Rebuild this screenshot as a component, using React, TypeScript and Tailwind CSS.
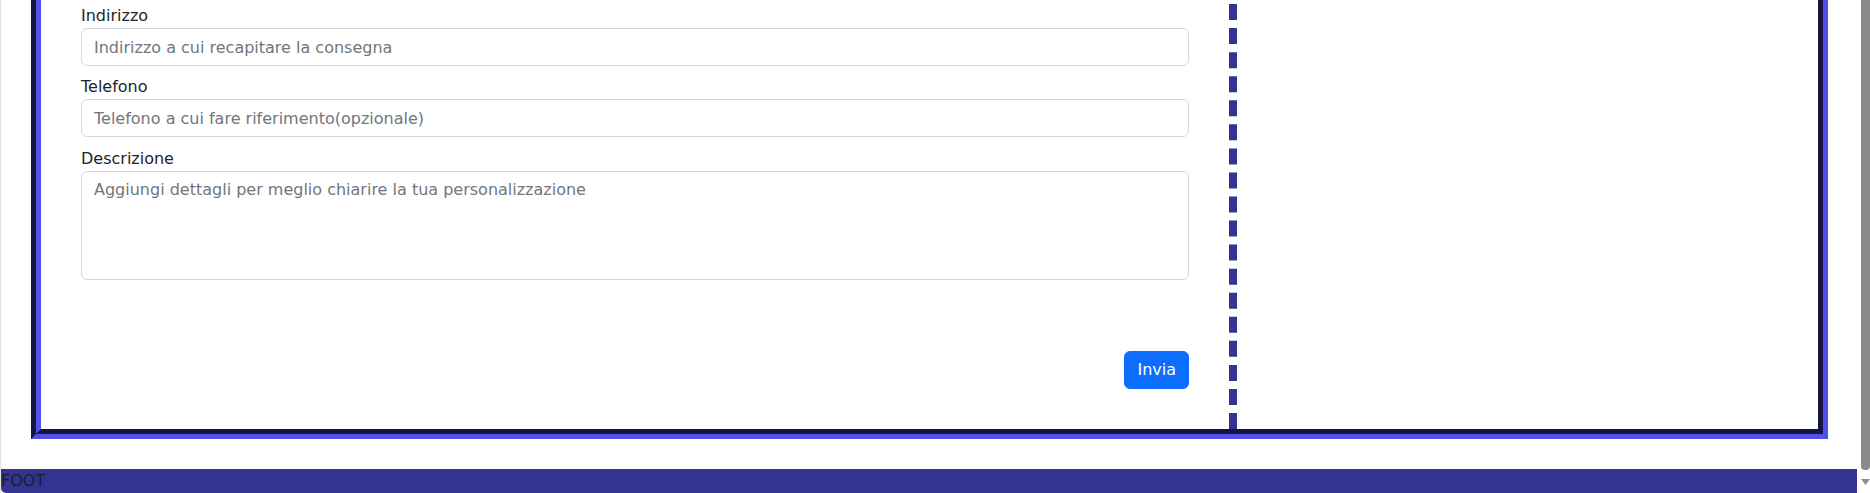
export default function App() {
  const font = { fontFamily: '"DejaVu Sans", Verdana, sans-serif' };

  return (
    <div className="flex h-[493px] w-full overflow-hidden bg-white" style={font}>
      {/* page */}
      <div className="flex flex-1 flex-col border-l border-[#e4e4e4]">
        <div className="ml-[30px] mr-[29px] border-l-[5px] border-r-[5px] border-b-[5px] border-l-[#151540] border-r-[#5050ea] border-b-[#5050ea]">
          <div className="flex border-l-[5px] border-r-[5px] border-b-[5px] border-l-[#5050ea] border-r-[#151540] border-b-[#151540]">
            <form className="flex w-[1188px] flex-col px-10 pt-[4px] pb-10 text-base leading-6 text-[#212529]">
              <label className="block">Indirizzo</label>
              <input
                type="text"
                placeholder="Indirizzo a cui recapitare la consegna"
                className="h-[38px] w-full rounded-[6px] border border-[#d4d7dc] px-3 text-base text-[#212529] outline-none placeholder:text-[#72767b]"
              />

              <label className="mt-[9px] block">Telefono</label>
              <input
                type="text"
                placeholder="Telefono a cui fare riferimento(opzionale)"
                className="h-[38px] w-full rounded-[6px] border border-[#d4d7dc] px-3 text-base text-[#212529] outline-none placeholder:text-[#72767b]"
              />

              <label className="mt-[10px] block">Descrizione</label>
              <textarea
                placeholder="Aggiungi dettagli per meglio chiarire la tua personalizzazione"
                className="h-[109px] w-full resize-none rounded-[6px] border border-[#d4d7dc] px-3 py-[6px] text-base leading-6 text-[#212529] outline-none placeholder:text-[#72767b]"
              />

              <div className="mt-[71px] flex justify-end">
                <button
                  type="button"
                  className="h-[38px] rounded-[6px] border border-[#0d6efd] bg-[#0d6efd] px-3 text-base leading-6 text-white"
                >
                  Invia
                </button>
              </div>
            </form>

            {/* divider column; the box continues above the visible area */}
            <div className="-mt-[20px] flex-1 border-l-8 border-dashed border-[#333392]" />
          </div>
        </div>

        <footer className="mt-[30px] h-6 rounded-bl-[5px] bg-[#333392] text-base leading-6 text-[#1e1e2a]">
          FOOT
        </footer>
      </div>

      {/* scrollbar */}
      <div className="flex w-[13px] flex-col bg-white">
        <div className="ml-[4px] h-[470px] w-[9px] rounded-b-[4px] bg-[#8b8b8b]" />
        <div className="ml-[4px] mt-[9px] flex w-[9px] justify-center">
          <svg width="9" height="6" viewBox="0 0 9 6">
            <path d="M0 0 H9 L4.5 6 Z" fill="#8b8b8b" />
          </svg>
        </div>
      </div>
    </div>
  );
}
